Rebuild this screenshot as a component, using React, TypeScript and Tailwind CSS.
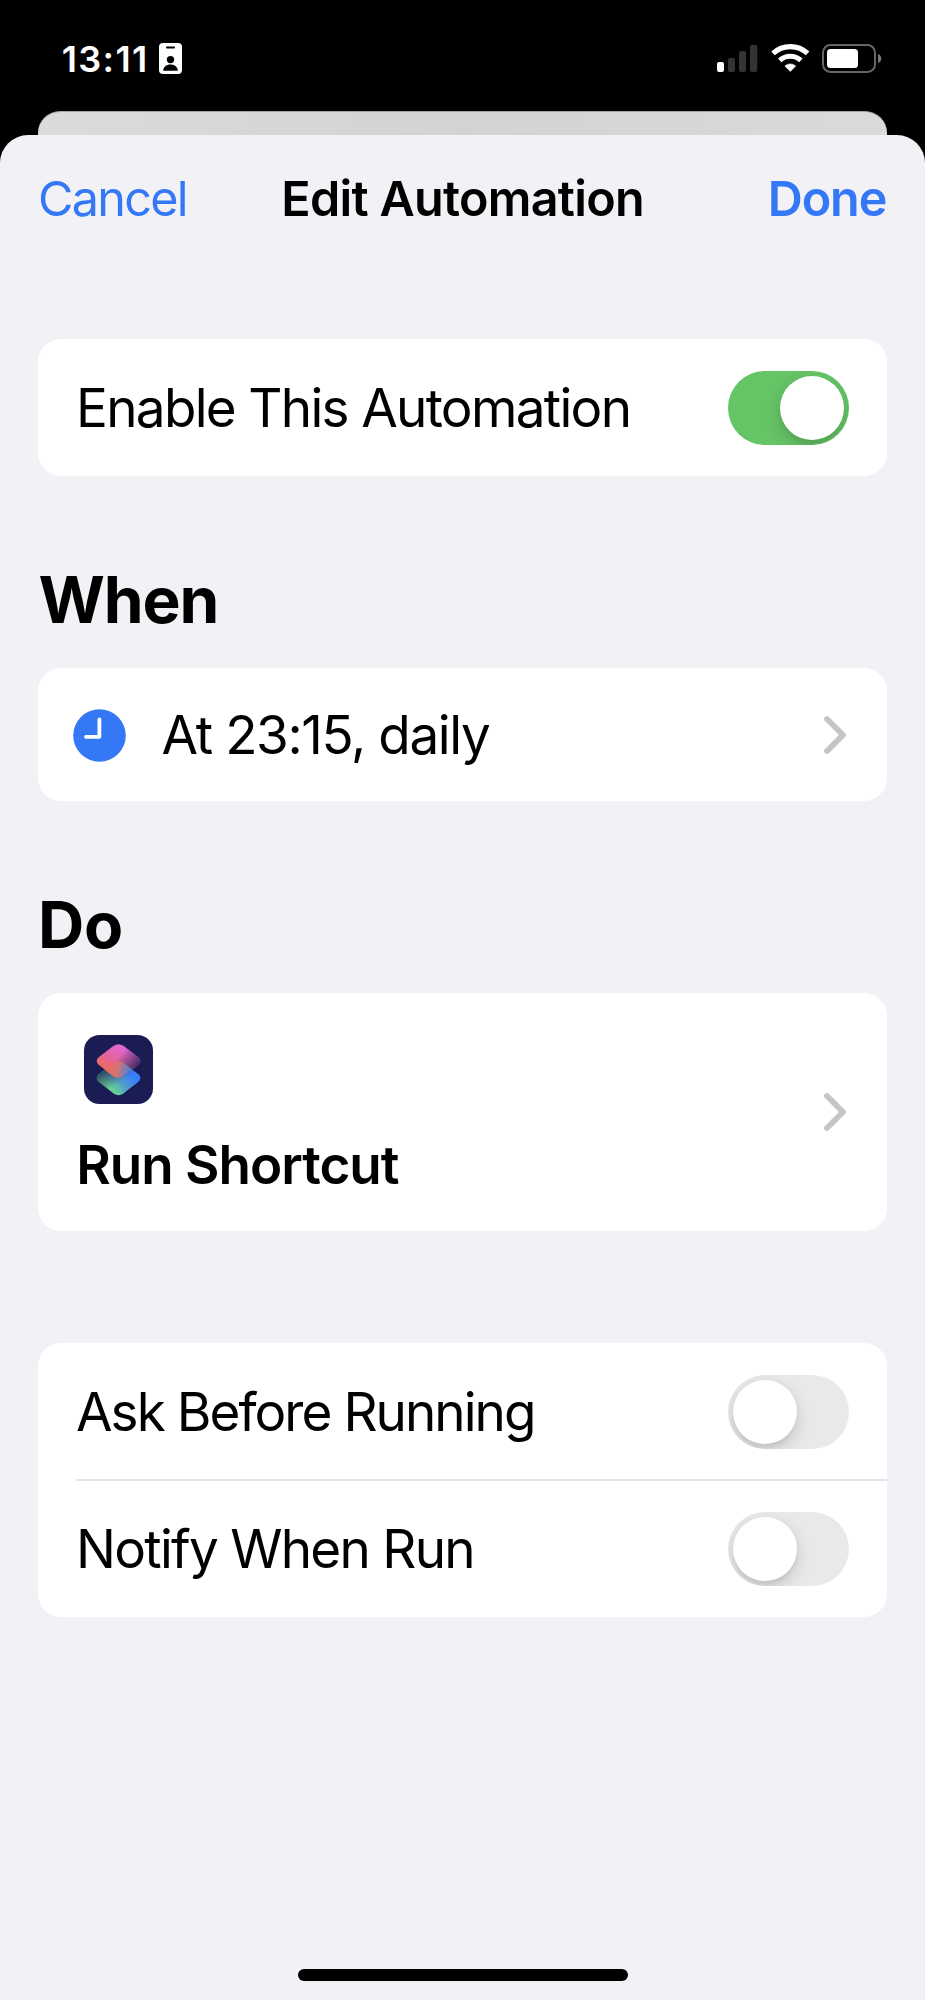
import type { ReactNode } from "react";

function IdBadgeIcon() {
  return (
    <svg width="23" height="31" viewBox="0 0 23 31">
      <rect width="23" height="31" rx="4" fill="#fff" />
      <rect x="7" y="3.4" width="9" height="2" rx="1" fill="#000" />
      <circle cx="11.5" cy="16.6" r="3.7" fill="#000" />
      <path d="M4.2 27.8 C4.2 24 7.2 21.4 11.5 21.4 C15.8 21.4 18.8 24 18.8 27.8 Z" fill="#000" />
    </svg>
  );
}

function SignalIcon() {
  return (
    <svg width="41" height="27" viewBox="0 0 41 27">
      <rect x="0" y="17" width="7" height="10" rx="2" fill="#fff" />
      <rect x="11" y="13" width="7" height="14" rx="2" fill="#333" />
      <rect x="22" y="6" width="7" height="21" rx="2" fill="#333" />
      <rect x="33" y="0" width="7.3" height="27" rx="2" fill="#333" />
    </svg>
  );
}

function WifiIcon() {
  return (
    <svg width="39" height="29" viewBox="0 0 39 29" fill="none" stroke="#fff">
      <path d="M2 10.3 A25.5 25.5 0 0 1 36.6 10.3" strokeWidth="5.2" />
      <path d="M8.7 17.4 A15.6 15.6 0 0 1 29.9 17.4" strokeWidth="5" />
      <path
        d="M19.3 28.4 L13.9 23 A8 8 0 0 1 24.7 23 Z"
        fill="#fff"
        strokeWidth="0.6"
        strokeLinejoin="round"
      />
    </svg>
  );
}

function BatteryIcon() {
  return (
    <svg width="60" height="29" viewBox="0 0 60 29">
      <rect x="1" y="1" width="52" height="27" rx="7.5" fill="none" stroke="#666" strokeWidth="2" />
      <rect x="5" y="5" width="31" height="19" rx="3.5" fill="#fff" />
      <path d="M56 10 C60.4 11.5 60.4 17.5 56 19 Z" fill="#777" />
    </svg>
  );
}

function ClockIcon() {
  return (
    <svg width="53" height="53" viewBox="0 0 53 53">
      <circle cx="26.5" cy="26.5" r="26.3" fill="#3478f6" />
      <path
        d="M26.4 10.4 V27.8 H13"
        fill="none"
        stroke="#fff"
        strokeWidth="3.8"
        strokeLinecap="round"
        strokeLinejoin="round"
      />
    </svg>
  );
}

function ChevronIcon() {
  return (
    <svg width="24" height="40" viewBox="0 0 24 40" fill="none">
      <path
        d="M4 4 L20 20 L4 36"
        stroke="#c5c5c7"
        strokeWidth="5.8"
        strokeLinecap="round"
        strokeLinejoin="round"
      />
    </svg>
  );
}

const DIAMOND =
  "M29.6 10.8 Q34.5 7.6 39.4 10.8 L54.1 22 Q58.6 26 54.1 30 L39.4 41.4 Q34.5 44.9 29.6 41.4 L14.9 30 Q10.4 26 14.9 22 Z";

function ShortcutsIcon() {
  return (
    <svg width="69" height="69" viewBox="0 0 69 69">
      <defs>
        <linearGradient id="upper" gradientUnits="userSpaceOnUse" x1="36" y1="9" x2="22" y2="36">
          <stop offset="0" stopColor="#e268d8" />
          <stop offset="0.55" stopColor="#e3649a" />
          <stop offset="1" stopColor="#ec6b52" />
        </linearGradient>
        <linearGradient id="upperShade" gradientUnits="userSpaceOnUse" x1="36" y1="20" x2="54" y2="33">
          <stop offset="0" stopColor="#1c1c55" stopOpacity="0" />
          <stop offset="1" stopColor="#1c1c55" stopOpacity="0.85" />
        </linearGradient>
        <linearGradient id="lower" gradientUnits="userSpaceOnUse" x1="49" y1="24" x2="31" y2="40">
          <stop offset="0" stopColor="#3a7df8" />
          <stop offset="0.5" stopColor="#4e9acb" />
          <stop offset="1" stopColor="#68d197" />
        </linearGradient>
        <linearGradient id="lowerShade" gradientUnits="userSpaceOnUse" x1="30" y1="35" x2="18" y2="18">
          <stop offset="0" stopColor="#1c1c55" stopOpacity="0" />
          <stop offset="1" stopColor="#1c1c55" stopOpacity="0.8" />
        </linearGradient>
        <linearGradient id="overlap" gradientUnits="userSpaceOnUse" x1="27" y1="17" x2="44" y2="22">
          <stop offset="0" stopColor="#e66c62" />
          <stop offset="0.4" stopColor="#cf7476" />
          <stop offset="1" stopColor="#4f83d6" />
        </linearGradient>
        <clipPath id="upperClip">
          <path d={DIAMOND} />
        </clipPath>
      </defs>
      <rect width="69" height="69" rx="15.5" fill="#1c1c55" />
      <path d={DIAMOND} transform="translate(0 17)" fill="url(#lower)" />
      <path d={DIAMOND} transform="translate(0 17)" fill="url(#lowerShade)" />
      <path d={DIAMOND} fill="url(#upper)" />
      <path d={DIAMOND} fill="url(#upperShade)" />
      <g clipPath="url(#upperClip)">
        <path d={DIAMOND} transform="translate(0 17)" fill="url(#overlap)" />
      </g>
    </svg>
  );
}

function Toggle({ on = false }: { on?: boolean }) {
  return (
    <div
      className={
        on
          ? "flex h-[74px] w-[121px] items-center justify-end overflow-hidden rounded-full bg-[#65c466] px-[5px]"
          : "flex h-[74px] w-[121px] items-center justify-start overflow-hidden rounded-full bg-[#e9e9e9] px-[5px]"
      }
    >
      <div className="size-16 rounded-full bg-white shadow-[0_6px_16px_rgba(0,0,0,0.16),0_4px_3px_rgba(0,0,0,0.04)]" />
    </div>
  );
}

function Card({ children, className }: { children: ReactNode; className: string }) {
  return <div className={`mx-[38px] rounded-[23px] bg-white ${className}`}>{children}</div>;
}

export default function App() {
  return (
    <div className="flex h-[2000px] w-[925px] flex-col overflow-hidden bg-black font-['Inter',sans-serif] text-black">
      <div className="flex h-[111px] shrink-0 items-start justify-between pr-[43px] pl-[61.7px]">
        <div className="flex pt-[43px]">
          <span className="h-[31px] w-[97px] pt-px text-[36px] leading-[31px] font-[560] tracking-[1.4px] text-white">
            13:11
          </span>
          <IdBadgeIcon />
        </div>
        <div className="flex pt-[43px]">
          <div className="mt-[2px] mr-[13px]">
            <SignalIcon />
          </div>
          <div className="mr-[12px]">
            <WifiIcon />
          </div>
          <div className="mt-px">
            <BatteryIcon />
          </div>
        </div>
      </div>

      <div className="mx-[38px] h-6 shrink-0 rounded-t-[22px] border-t border-[#a5a5a5] bg-linear-to-r from-[#dbdbdb] via-[#d3d3d3] to-[#dadada]" />

      <div className="flex grow flex-col rounded-t-[28px] bg-[#f2f1f6]">
        <header className="flex h-[127px] shrink-0 items-center text-[48.5px] leading-[60px] whitespace-nowrap">
          <span className="w-[281.3px] pl-[38px] tracking-[-1.7px] text-[#3478f6]">Cancel</span>
          <h1 className="w-[486.4px] font-semibold tracking-[-0.71px]">Edit Automation</h1>
          <span className="font-semibold tracking-[-1.08px] text-[#3478f6]">Done</span>
        </header>

        <Card className="mt-[77px] flex h-[137px] shrink-0 items-center justify-between pr-[38px] pl-[38px]">
          <span className="pt-px text-[53px] leading-[64px] tracking-[-1.68px]">Enable This Automation</span>
          <Toggle on />
        </Card>

        <h2 className="mt-[85px] mb-[29px] ml-[38.5px] text-[64px] leading-[78px] font-bold tracking-[-1.1px]">
          When
        </h2>
        <Card className="flex h-[133px] shrink-0 items-center pr-[40px] pl-[35px]">
          <div className="pt-px">
            <ClockIcon />
          </div>
          <span className="grow pt-px pl-[35.5px] text-[53px] leading-[64px] tracking-[-1.38px]">
            At 23:15, daily
          </span>
          <ChevronIcon />
        </Card>

        <h2 className="mt-[85px] mb-[29px] ml-[38px] text-[64px] leading-[78px] font-bold tracking-[-0.22px]">
          Do
        </h2>
        <Card className="flex h-[238px] shrink-0 items-center justify-between pr-[40px] pl-[38.3px]">
          <div className="flex flex-col">
            <div className="ml-2 pt-[7px]">
              <ShortcutsIcon />
            </div>
            <span className="mt-[29px] text-[53px] leading-[64px] font-semibold tracking-[-1.01px]">
              Run Shortcut
            </span>
          </div>
          <ChevronIcon />
        </Card>

        <Card className="mt-[112px] flex shrink-0 flex-col pl-[38px]">
          <div className="flex h-[138px] items-center justify-between border-b-2 border-[#e4e4e5] pt-[2px] pr-[38px]">
            <span className="text-[53px] leading-[64px] tracking-[-1.95px]">Ask Before Running</span>
            <Toggle />
          </div>
          <div className="flex h-[136px] items-center justify-between pr-[38px]">
            <span className="text-[53px] leading-[64px] tracking-[-1.72px]">Notify When Run</span>
            <Toggle />
          </div>
        </Card>

        <div className="mt-auto mb-[19px] flex justify-center">
          <div className="h-3 w-[330px] rounded-full bg-black" />
        </div>
      </div>
    </div>
  );
}
